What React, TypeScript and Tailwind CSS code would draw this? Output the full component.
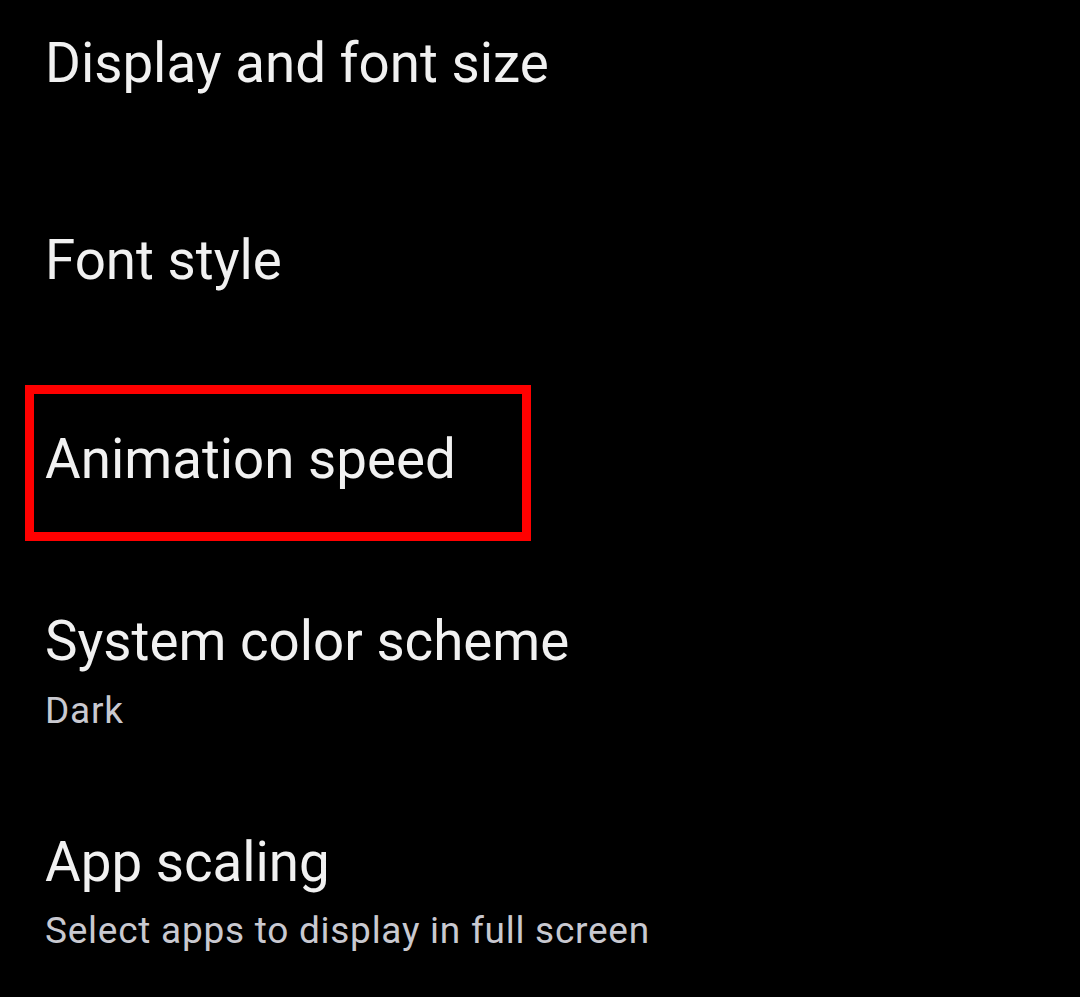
export default function App() {
  const font = { fontFamily: 'Roboto, "Noto Sans", sans-serif' };

  return (
    <div className="min-h-[997px] w-[1080px] bg-black overflow-hidden" style={font}>
      <div className="flex flex-col pt-[31px]">
        <div className="pl-[45px] text-[54.7px] leading-[64px] text-[#f1f1f1]">Display and font size</div>

        <div className="mt-[133px] pl-[45px] text-[54.7px] leading-[64px] text-[#f1f1f1]">Font style</div>

        <div className="mt-[93px] ml-[25px] w-[506px] border-[9px] border-[#ff0000] pl-[11px] pt-[33px] pb-[41px]">
          <div className="text-[54.7px] leading-[64px] text-[#f1f1f1]">Animation speed</div>
        </div>

        <div className="mt-[68px] pl-[45px]">
          <div className="text-[54.7px] leading-[64px] text-[#f1f1f1]">System color scheme</div>
          <div className="mt-[16px] text-[37px] leading-[44px] tracking-[0.02em] text-[#c9c9d0]">Dark</div>
        </div>

        <div className="mt-[97px] pl-[45px]">
          <div className="text-[54.7px] leading-[64px] text-[#f1f1f1]">App scaling</div>
          <div className="mt-[15px] text-[37px] leading-[44px] tracking-[0.02em] text-[#c9c9d0]">
            Select apps to display in full screen
          </div>
        </div>
      </div>
    </div>
  );
}
